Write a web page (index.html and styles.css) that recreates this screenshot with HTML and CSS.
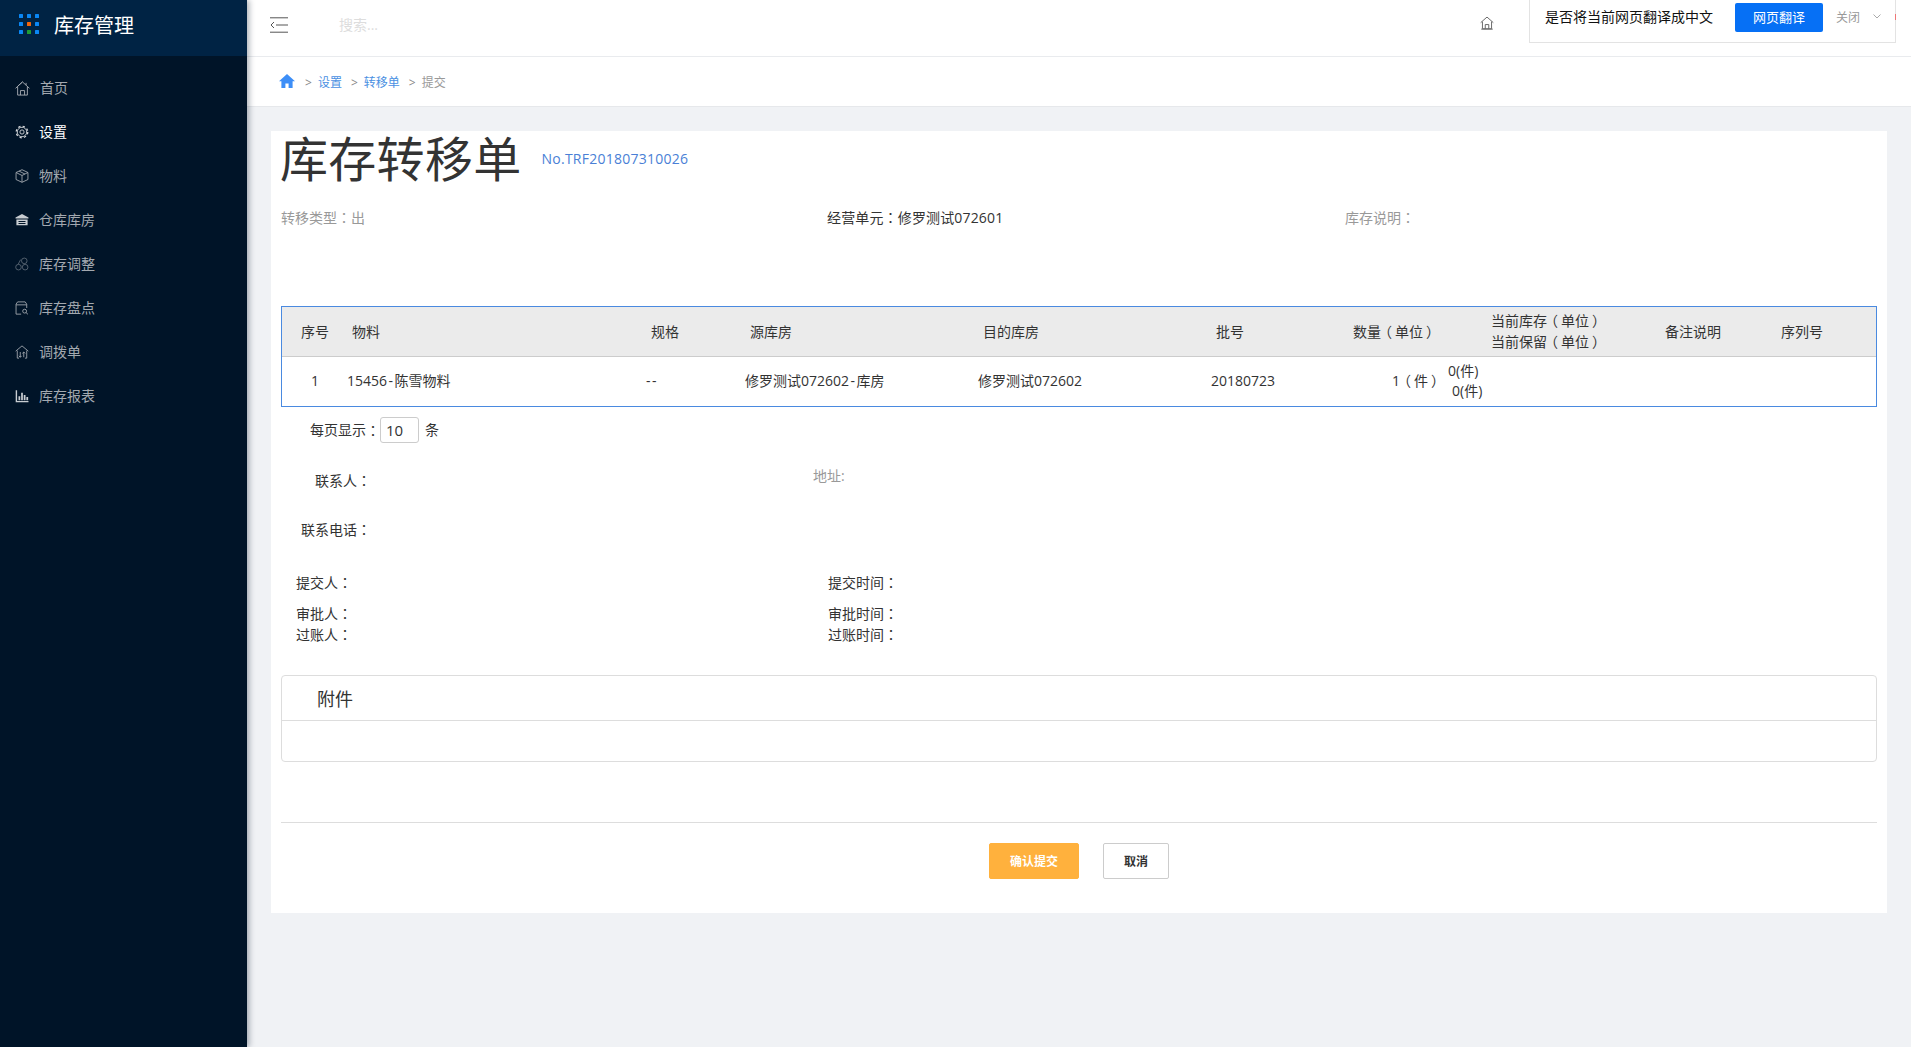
FILE: index.html
```html
<!DOCTYPE html>
<html lang="zh-CN">
<head>
<meta charset="utf-8">
<title>库存转移单</title>
<link rel="stylesheet" href="styles.css">
</head>
<body>
<div class="app">
  <aside class="side">
    <div class="brand">
      <div class="dots"><i></i><i></i><i></i><i></i><i class="o"></i><i></i><i></i><i class="g"></i><i></i></div>
      <span class="brand-name">库存管理</span>
    </div>
    <nav class="menu">
      <a class="item"><svg class="ic-home" viewBox="0 0 16 16"><path d="M.6 7.800 8 1l7.400 6.800M2.800 6.200V15h10.400V6.200M5.800 15v-4.800h4.400V15M11.800 2v2.400M3 5.400 8 .9"/></svg><span class="nudge">首页</span></a>
      <a class="item on"><svg viewBox="0 0 16 16"><circle cx="8" cy="8" r="5.400"/><circle class="teeth" cx="8" cy="8" r="6.600"/><circle cx="8" cy="8" r="2.400"/></svg>设置</a>
      <a class="item"><svg viewBox="0 0 16 16"><path d="M8 .8 14.800 4v8L8 15.200 1.200 12V4zM1.200 4 8 7.400 14.800 4M8 7.400v7.800M4.600 2.400l6.800 3.400"/></svg>物料</a>
      <a class="item"><svg viewBox="0 0 16 16"><path class="fill" d="M8 1 15.400 5v1.400H.6V5zM1.600 7.400h12.800V14H1.600zM4 9v1.200h8V9zM4 11.400v1.200h8v-1.200z"/></svg>仓库库房</a>
      <a class="item dim"><svg viewBox="0 0 16 16"><circle cx="4" cy="11.600" r="3.200"/><circle cx="11.600" cy="11.600" r="3.200"/><circle cx="10.600" cy="4.400" r="3.200"/><path d="M3.600 8.400 6.400 3"/></svg>库存调整</a>
      <a class="item"><svg viewBox="0 0 16 16"><path d="M7 15H1.200V3.600L3 1h8.600l1.800 2.600V8M1.200 4.400h12.200"/><circle cx="11" cy="11.600" r="2.200"/><path d="m12.600 13.200 2.200 2"/></svg>库存盘点</a>
      <a class="item"><svg viewBox="0 0 16 16"><path d="M.8 7 8 1l7.200 6M2.600 6.400V15h2M13.400 6.400V15h-2M6 8v6M4.400 12.400 6 14l1.600-1.600M10 14V8M8.400 9.600 10 8l1.600 1.600"/></svg>调拨单</a>
      <a class="item"><svg viewBox="0 0 16 16"><path class="fill" d="M.8 1.400h1.600v12.400h13v1.400H.8zM4 8.400h2v4.400H4zM7 4.400h2v8.400H7zM10 6.800h2v6h-2zM13 9h2v3.800h-2z"/></svg>库存报表</a>
    </nav>
  </aside>
  <main class="main">
    <header class="top">
      <svg class="collapse" viewBox="0 0 18 16"><path d="M0 .8h18M6 8h12M0 15.200h18M4 5 1 8l3 3"/></svg>
      <span class="search">搜索...</span>
      <svg class="top-home" viewBox="0 0 16 16"><path d="M.8 7.600 8 1.200l7.200 6.400M2.800 6.400v8.200h10.400V6.400M6 14.600V9.800h4v4.800M1.400 15h13.200"/></svg>
      <div class="translate">
        <span class="tr-text">是否将当前网页翻译成中文</span>
        <span class="tr-btn">网页翻译</span>
        <span class="tr-close">关闭</span>
        <svg class="tr-chev" viewBox="0 0 8 5"><path d="m.5.5 3.500 3.500L7.500.5"/></svg>
      </div>
      <i class="tr-dot"></i>
    </header>
    <div class="crumbs">
      <svg class="crumb-home" viewBox="0 0 16 14"><path d="M8 0 0 7.200h2.400V14h4V9.400h3.200V14h4V7.200H16z"/></svg>
      <span class="sep">&gt;</span><a class="link">设置</a>
      <span class="sep">&gt;</span><a class="link">转移单</a>
      <span class="sep">&gt;</span><span class="cur">提交</span>
    </div>
    <section class="card">
      <div class="title-row">
        <h1>库存转移单</h1>
        <span class="no">No.TRF201807310026</span>
      </div>
      <div class="info">
        <span class="muted">转移类型<span class="pt" lang="zh-TW">：</span>出</span>
        <span class="unit-name">经营单元<span class="pt" lang="zh-TW">：</span>修罗测试072601</span>
        <span class="muted">库存说明<span class="pt" lang="zh-TW">：</span></span>
      </div>
      <table class="grid">
        <colgroup>
          <col class="c1"><col class="c2"><col class="c3"><col class="c4"><col class="c5"><col class="c6"><col class="c7"><col class="c8"><col class="c9"><col class="c10">
        </colgroup>
        <thead>
          <tr>
            <th class="mid">序号</th>
            <th class="p6">物料</th>
            <th class="p6">规格</th>
            <th class="p6">源库房</th>
            <th class="p6">目的库房</th>
            <th class="p7">批号</th>
            <th class="p1">数量<span class="po">（</span>单位<span class="pc">）</span></th>
            <th class="p49">当前库存<span class="po">（</span>单位<span class="pc">）</span><br>当前保留<span class="po">（</span>单位<span class="pc">）</span></th>
            <th class="p5">备注说明</th>
            <th class="p6">序列号</th>
          </tr>
        </thead>
        <tbody>
          <tr>
            <td class="mid">1</td>
            <td class="p1">15456<span class="hy">-</span>陈雪物料</td>
            <td class="p1 dash">--</td>
            <td class="p1">修罗测试072602<span class="hy">-</span>库房</td>
            <td class="p1">修罗测试072602</td>
            <td class="p2">20180723</td>
            <td class="qty">1<span class="po">（</span>件<span class="pc">）</span></td>
            <td class="stock">0(件)<br><span class="stock-2">0(件)</span></td>
            <td></td>
            <td></td>
          </tr>
        </tbody>
      </table>
      <div class="pager">每页显示<span class="pt" lang="zh-TW">：</span><span class="size">10</span><span class="unit">条</span></div>
      <div class="contact">
        <div class="contact-l">
          <div class="lbl">联系人<span class="pt" lang="zh-TW">：</span></div>
          <div class="lbl">联系电话<span class="pt" lang="zh-TW">：</span></div>
        </div>
        <div class="muted">地址:</div>
      </div>
      <div class="signs">
        <span class="first">提交人<span class="pt" lang="zh-TW">：</span></span><span class="first">提交时间<span class="pt" lang="zh-TW">：</span></span>
        <span>审批人<span class="pt" lang="zh-TW">：</span></span><span>审批时间<span class="pt" lang="zh-TW">：</span></span>
        <span>过账人<span class="pt" lang="zh-TW">：</span></span><span>过账时间<span class="pt" lang="zh-TW">：</span></span>
      </div>
      <div class="panel">
        <div class="panel-head">附件</div>
        <div class="panel-body"></div>
      </div>
      <div class="rule"></div>
      <div class="actions">
        <button class="btn ok">确认提交</button>
        <button class="btn no-btn">取消</button>
      </div>
    </section>
  </main>
</div>
</body>
</html>
```
FILE: styles.css
```css
* { box-sizing: border-box; }
html, body { margin: 0; padding: 0; height: 100%; overflow: hidden; }
body {
  font-family: "Open Sans", "Noto Sans CJK SC", sans-serif;
  font-size: 14px;
  line-height: 20px;
  color: #333;
  background: #f0f2f5;
}
.pt { font-family: "Noto Sans CJK TC", sans-serif; line-height: 0; }
.po { margin: 0 3px 0 -3px; }
.pc { margin: 0 -3px 0 3px; }
.app { display: flex; height: 1047px; }

.side {
  width: 247px;
  flex: none;
  background: #001428;
  box-shadow: 2px 0 6px rgba(0, 21, 41, .35);
  position: relative;
  z-index: 2;
}
.brand {
  height: 56px;
  background: #002344;
  display: flex;
  align-items: center;
  padding-left: 19px;
  gap: 15px;
}
.dots {
  display: grid;
  grid-template-columns: repeat(3, 4px);
  grid-template-rows: repeat(3, 4px);
  gap: 4px;
  margin-top: -8px;
}
.dots i { background: #0a87f5; border-radius: .5px; }
.dots .o { background: #f4650c; }
.dots .g { background: #1f9c35; }
.brand-name { color: #fff; font-size: 20px; line-height: 28px; margin-top: -6px; font-family: "Noto Sans CJK SC", sans-serif; }
.menu { padding-top: 10px; }
.item {
  height: 44px;
  display: flex;
  align-items: center;
  gap: 10px;
  padding-left: 15px;
  color: #a3a9b0;
}
.item svg {
  width: 14px;
  height: 14px;
  fill: none;
  stroke: #a3a9b0;
  stroke-width: 1;
  overflow: visible;
}
.item svg.ic-home { width: 15px; height: 15px; margin-right: -1px; }
.nudge { margin-left: 1px; }
.item svg .fill { fill: #c8cdd2; stroke: none; }
.item svg .teeth { stroke-width: 1.400; stroke-dasharray: 2.600 2.580; }
.item.on { color: #fff; }
.item.on svg { stroke: #d8dbde; }
.item.dim svg { stroke: #5c6875; }

.main { flex: 1; min-width: 0; }
.top {
  height: 57px;
  background: #fff;
  border-bottom: 1px solid #e9ebee;
  display: flex;
  align-items: center;
  position: relative;
}
.collapse { width: 18px; height: 16px; margin-left: 23px; margin-top: -7px; fill: none; stroke: #555; stroke-width: 1; flex: none; }
.search { margin-left: 51px; color: #ddd; margin-top: -6px; }
.top-home { width: 14px; height: 14px; position: absolute; left: 1233px; top: 16px; fill: none; stroke: #666; stroke-width: 1.100; }
.translate {
  position: absolute;
  left: 1282px;
  top: 0;
  width: 367px;
  height: 43px;
  background: #fff;
  border: 1px solid #e3e3e3;
  border-top: 0;
  display: flex;
  align-items: flex-start;
  padding: 3px 0 0 15px;
}
.tr-text { color: #111; line-height: 27px; width: 190px; flex: none; }
.tr-btn {
  width: 88px;
  height: 29px;
  flex: none;
  background: #0670f5;
  border-radius: 2px;
  color: #fff;
  font-size: 13px;
  line-height: 28px;
  text-align: center;
}
.tr-close { margin-left: 13px; font-size: 12px; line-height: 29px; color: #999; }
.tr-chev { width: 8px; height: 5px; margin: 11px 0 0 13px; fill: none; stroke: #aaa; stroke-width: 1; }
.tr-dot { position: absolute; left: 1648px; top: 14px; width: 1px; height: 6px; background: #e77; }

.crumbs {
  height: 50px;
  background: #fff;
  border-bottom: 1px solid #e6e8eb;
  display: flex;
  align-items: center;
  padding: 2px 0 0 32px;
  font-size: 12px;
}
.crumb-home { width: 16px; height: 14px; fill: #3d8ef7; margin-top: -4px; margin-right: 10px; }
.sep { color: #888; margin-right: 6px; }
.link { color: #4a90e2; margin-right: 9px; }
.cur { color: #999; }

.card {
  margin: 24px 24px 0;
  background: #fff;
  padding: 0 10px 34px;
  height: 782px;
}
.title-row { display: flex; align-items: center; height: 56px; gap: 20px; }
h1 { margin: 0 0 0 -1px; font-size: 48px; font-weight: 400; line-height: 56px; color: #333; letter-spacing: .3px; }
.no { color: #4a7fd6; margin-top: -1px; letter-spacing: .25px; }
.info {
  display: grid;
  grid-template-columns: 546px 518px 1fr;
  margin-top: 21px;
}
.unit-name { letter-spacing: .15px; }
.muted { color: #999; }

.grid {
  width: 100%;
  table-layout: fixed;
  border-collapse: separate;
  border-spacing: 0;
  border: 1px solid #4a8ae0;
  margin-top: 78px;
  text-align: left;
}
.c1 { width: 64px; } .c2 { width: 299px; } .c3 { width: 99px; } .c4 { width: 233px; } .c5 { width: 232px; }
.c6 { width: 143px; } .c7 { width: 90px; } .c8 { width: 218px; } .c9 { width: 115px; } .c10 { width: 101px; }
.grid th {
  height: 50px;
  padding: 0;
  font-weight: 400;
  line-height: 21px;
  background: #ebebeb;
  border-bottom: 1px solid #ccc;
  white-space: nowrap;
}
.grid thead th:nth-child(8) { padding-bottom: 2px; }
.grid td { height: 49px; padding: 0 0 2px; white-space: nowrap; }
.grid .mid { text-align: center; padding-left: 2px; }
.grid .p1 { padding-left: 1px; }
.grid .p2 { padding-left: 2px; }
.grid .p5 { padding-left: 5px; }
.grid .p6 { padding-left: 6px; }
.grid .p7 { padding-left: 7px; }
.grid .p49 { padding-left: 49px; }
.dash { letter-spacing: 1.500px; }
.hy { margin: 0 1.500px; }
.grid .qty { text-align: right; }
.grid .stock { padding-left: 6px; }
.stock-2 { margin-left: 4px; }

.pager { display: flex; align-items: center; height: 26px; margin-top: 10px; padding-left: 29px; }
.size {
  width: 39px;
  height: 26px;
  border: 1px solid #ccc;
  border-radius: 3px;
  padding-left: 5px;
  font-size: 15px;
  line-height: 24px;
}
.unit { margin-left: 6px; }

.contact { display: flex; margin-top: 23px; }
.contact-l { width: 532px; padding-top: 5px; }
.lbl { width: 90px; text-align: right; height: 20px; margin-bottom: 29px; }
.contact-l .lbl:last-child { margin-bottom: 0; }

.signs {
  display: grid;
  grid-template-columns: 532px 1fr;
  row-gap: 1px;
  padding-left: 15px;
  margin-top: 33px;
}
.signs .first { margin-bottom: 10px; }

.panel { border: 1px solid #ddd; border-radius: 4px; margin-top: 30px; height: 87px; }
.panel-head {
  height: 45px;
  border-bottom: 1px solid #ddd;
  font-size: 18px;
  line-height: 46px;
  padding-left: 35px;
}
.rule { border-top: 1px solid #ddd; margin-top: 60px; }
.actions { display: flex; justify-content: center; gap: 24px; margin-top: 20px; }
.btn {
  height: 36px;
  padding: 0;
  border-radius: 2px;
  font: 700 12px/34px "Noto Sans CJK SC", sans-serif;
}
.ok { width: 90px; background: #ffb13d; border: 1px solid #ffb13d; color: #fff; }
.no-btn { width: 66px; background: #fff; border: 1px solid #ccc; color: #333; }
```
